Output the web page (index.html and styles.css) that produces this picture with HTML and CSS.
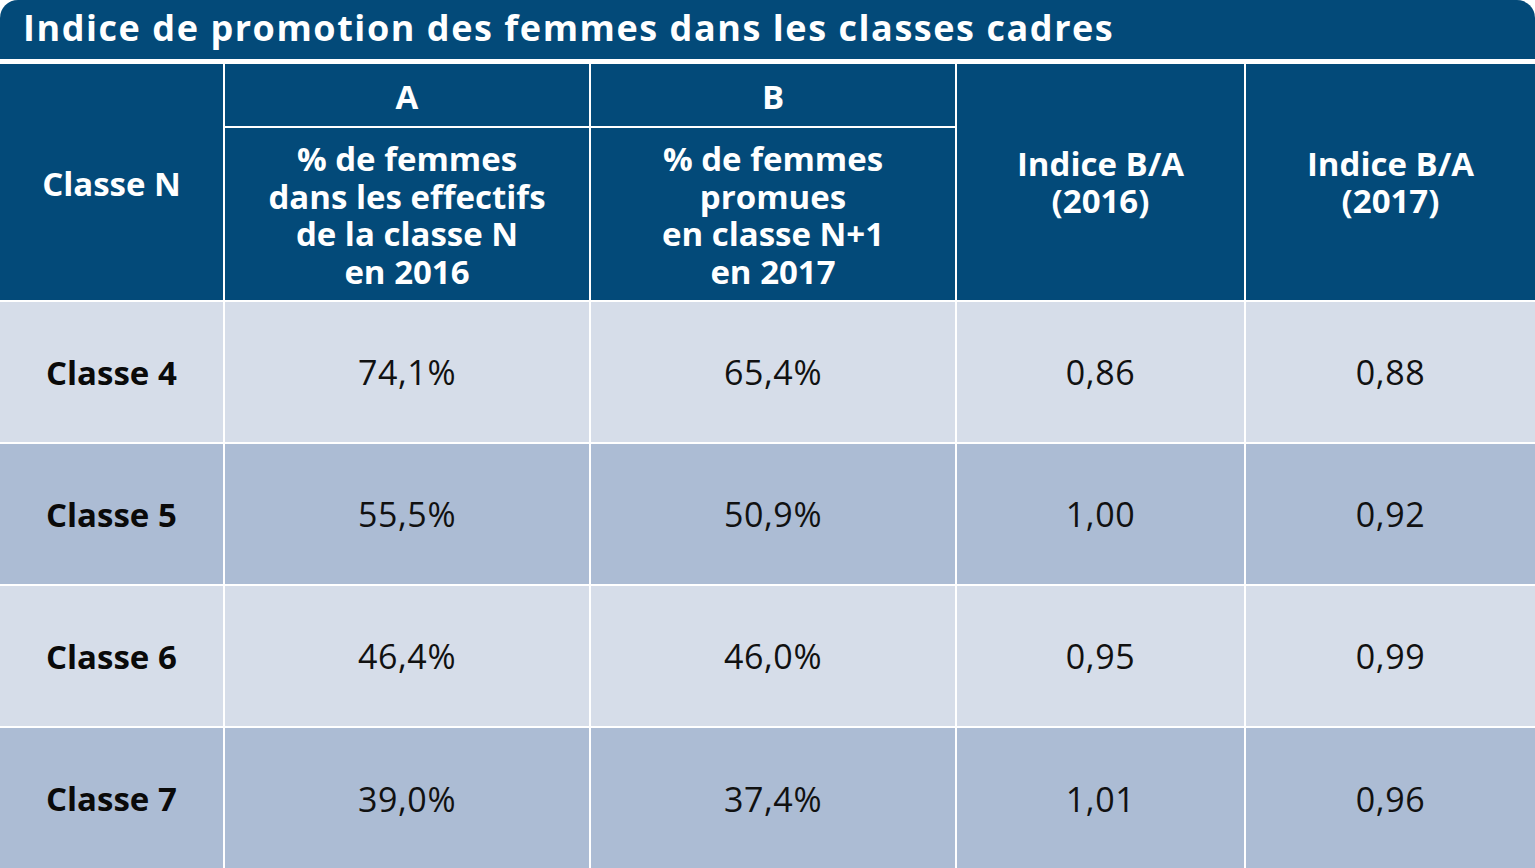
FILE: index.html
```html
<!DOCTYPE html>
<html lang="fr">
<head>
<meta charset="utf-8">
<title>Indice de promotion</title>
<link rel="stylesheet" href="styles.css">
</head>
<body>
<div class="card">
  <div class="title">Indice de promotion des femmes dans les classes cadres</div>
  <table class="grid">
    <colgroup>
      <col class="c1"><col class="c2"><col class="c3"><col class="c4"><col class="c5">
    </colgroup>
    <thead>
      <tr class="hrow1">
        <th rowspan="2" class="classn">Classe N</th>
        <th class="letter">A</th>
        <th class="letter">B</th>
        <th rowspan="2">Indice B/A<br>(2016)</th>
        <th rowspan="2">Indice B/A<br>(2017)</th>
      </tr>
      <tr class="hrow2">
        <th class="long">% de femmes<br>dans les effectifs<br>de la classe N<br>en 2016</th>
        <th class="long">% de femmes<br>promues<br>en classe N+1<br>en 2017</th>
      </tr>
    </thead>
    <tbody>
      <tr class="light"><th>Classe 4</th><td>74,1%</td><td>65,4%</td><td>0,86</td><td>0,88</td></tr>
      <tr class="dark"><th>Classe 5</th><td>55,5%</td><td>50,9%</td><td>1,00</td><td>0,92</td></tr>
      <tr class="light"><th>Classe 6</th><td>46,4%</td><td>46,0%</td><td>0,95</td><td>0,99</td></tr>
      <tr class="dark"><th>Classe 7</th><td>39,0%</td><td>37,4%</td><td>1,01</td><td>0,96</td></tr>
    </tbody>
  </table>
</div>
</body>
</html>
```
FILE: styles.css
```css
html, body {
  margin: 0;
  padding: 0;
  background: #ffffff;
}
body {
  width: 1535px;
  height: 868px;
  overflow: hidden;
  font-family: "Open Sans", "DejaVu Sans", sans-serif;
}
.card {
  display: flex;
  flex-direction: column;
  gap: 5px;
}
.title {
  height: 59px;
  box-sizing: border-box;
  background: #034a79;
  color: #ffffff;
  border-radius: 18px 18px 0 0;
  padding-left: 23px;
  font-weight: 700;
  font-size: 36px;
  line-height: 56px;
  letter-spacing: 1.55px;
  white-space: nowrap;
}
.grid {
  width: 1535px;
  table-layout: fixed;
  border-collapse: collapse;
  border-style: hidden;
}
.c1 { width: 224px; }
.c2 { width: 366px; }
.c3 { width: 366px; }
.c4 { width: 289px; }
.c5 { width: 290px; }
.grid th, .grid td {
  border: 2px solid #ffffff;
  padding: 0;
  text-align: center;
  vertical-align: middle;
  font-size: 33px;
}
.grid thead th {
  background: #034a79;
  color: #ffffff;
  font-weight: 700;
  line-height: 37.5px;
}
.grid th.classn {
  padding-top: 3px;
}
.hrow1 { height: 63px; }
.hrow2 { height: 174px; }
.grid th.letter {
  line-height: 30px;
  padding-top: 4px;
}
.grid th.long {
  vertical-align: bottom;
  padding-bottom: 10px;
}
.grid tbody tr { height: 142px; }
.grid tbody th {
  font-weight: 700;
  color: #0a0a0a;
  text-align: left;
  padding-left: 46px;
}
.grid tbody td {
  color: #111111;
  font-weight: 400;
  font-size: 34px;
  letter-spacing: 0.6px;
}
.light th, .light td { background: #d6dde9; }
.dark th, .dark td { background: #acbcd4; }
```
